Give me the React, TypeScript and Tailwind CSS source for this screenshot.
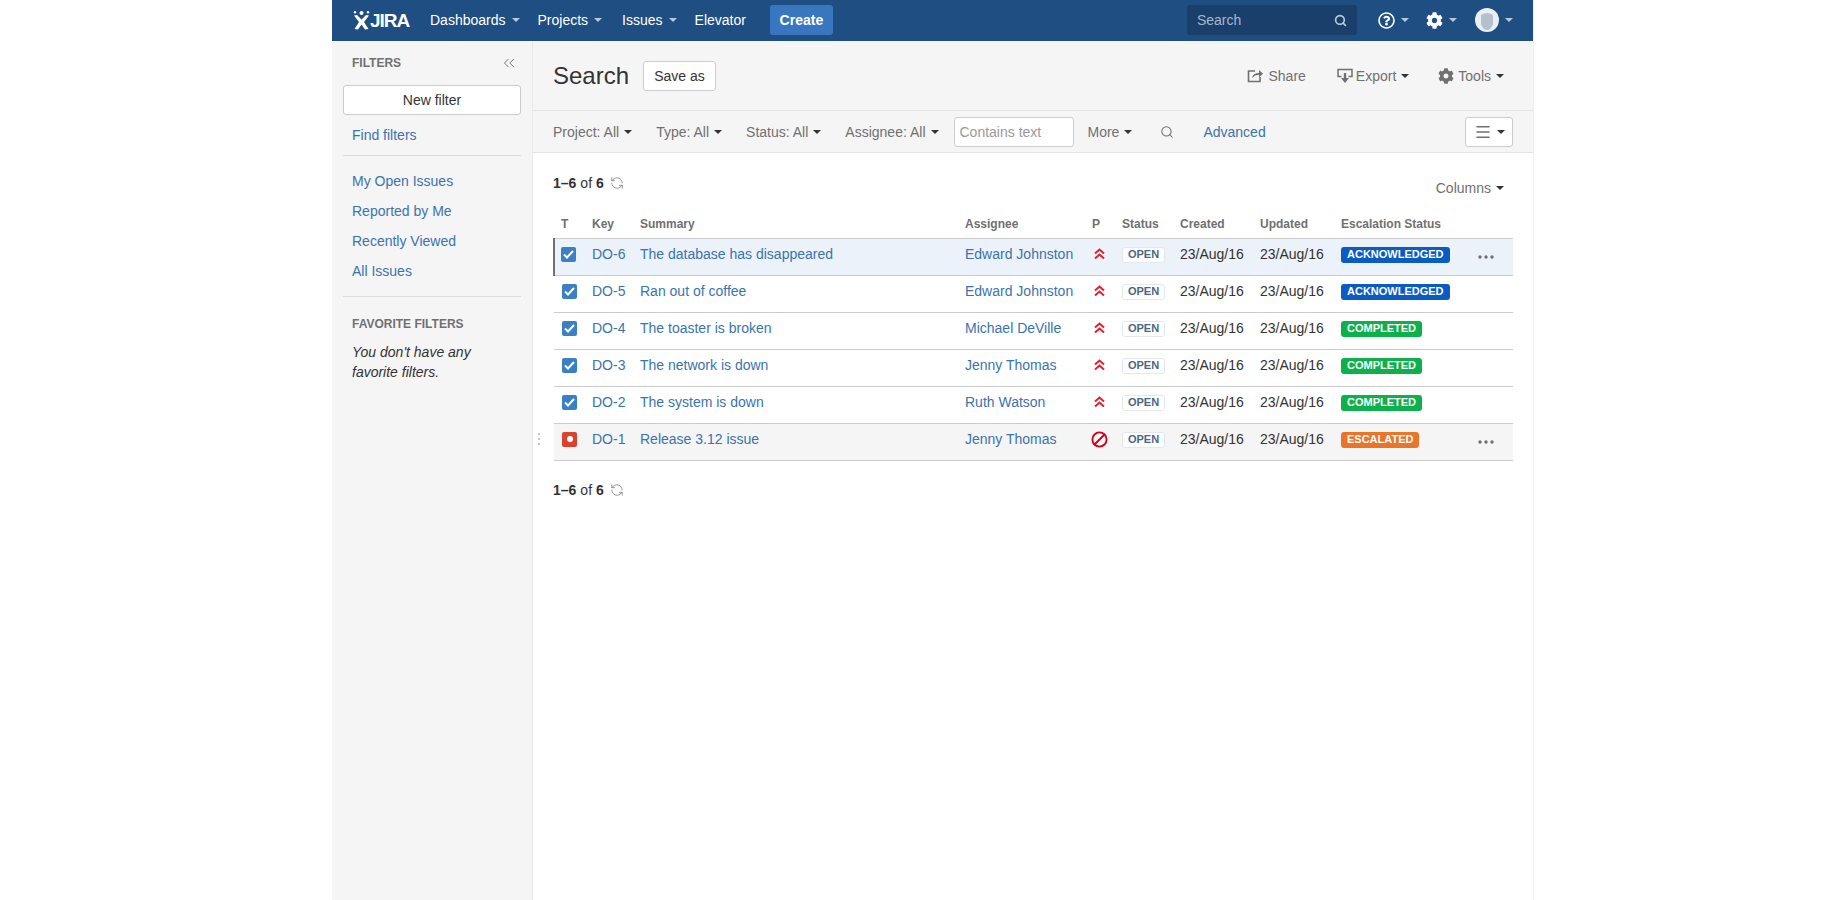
import React from "react";
import { Ban, ChevronsLeft, Menu, RefreshCcw, Search } from "lucide-react";
import { FaCog, FaRegQuestionCircle } from "react-icons/fa";

interface Issue {
  key: string;
  summary: string;
  assignee: string;
  escalation: string;
  badge: string;
}

const issues: Issue[] = [
  { key: "DO-6", summary: "The database has disappeared", assignee: "Edward Johnston", escalation: "ACKNOWLEDGED", badge: "bg-[#0b5cc2]" },
  { key: "DO-5", summary: "Ran out of coffee", assignee: "Edward Johnston", escalation: "ACKNOWLEDGED", badge: "bg-[#0b5cc2]" },
  { key: "DO-4", summary: "The toaster is broken", assignee: "Michael DeVille", escalation: "COMPLETED", badge: "bg-[#0cb14b]" },
  { key: "DO-3", summary: "The network is down", assignee: "Jenny Thomas", escalation: "COMPLETED", badge: "bg-[#0cb14b]" },
  { key: "DO-2", summary: "The system is down", assignee: "Ruth Watson", escalation: "COMPLETED", badge: "bg-[#0cb14b]" },
  { key: "DO-1", summary: "Release 3.12 issue", assignee: "Jenny Thomas", escalation: "ESCALATED", badge: "bg-[#ea7428]" },
];

function Caret({ light }: { light?: boolean }) {
  return (
    <span
      className={
        light
          ? "inline-block ml-[6px] w-0 h-0 border-x-[4px] border-x-transparent border-t-[4px] border-t-[#b9c9da]"
          : "inline-block ml-[5px] w-0 h-0 border-x-[4px] border-x-transparent border-t-[4px] border-t-[#333333]"
      }
    />
  );
}

function JiraLogo() {
  return (
    <div className="flex items-center w-[55px]">
      <svg width="17" height="20" viewBox="0 0 17 20" fill="white" className="shrink-0">
        <circle cx="8.5" cy="3" r="2" />
        <circle cx="2" cy="2.2" r="1.2" />
        <circle cx="15" cy="2.2" r="1.2" />
        <path d="M1 5.5 L4 5 L8.5 9.5 L13 5 L16 5.5 L11 12 L15.5 19 L12 19.5 L8.5 14.5 L5 19.5 L1.5 19 L6 12 Z" />
      </svg>
      <span className="text-[19px] font-bold text-white tracking-[-1px] leading-none">JIRA</span>
    </div>
  );
}

function NavItem({ label, caret, className }: { label: string; caret?: boolean; className: string }) {
  return (
    <div className={"flex items-center text-white " + className}>
      {label}
      {caret && <Caret light />}
    </div>
  );
}

function Header() {
  return (
    <header className="h-[41px] bg-[#1f4e82] flex items-center pl-[21px] pb-[1px] text-sm">
      <JiraLogo />
      <NavItem label="Dashboards" caret className="ml-[22px]" />
      <NavItem label="Projects" caret className="ml-[18px]" />
      <NavItem label="Issues" caret className="ml-[20px]" />
      <NavItem label="Elevator" className="ml-[18px]" />
      <button className="ml-[24px] w-[63px] h-[30px] rounded-[3px] bg-[#3877c0] text-white font-bold">Create</button>
      <div className="ml-[354px] w-[170px] h-[30px] rounded-[3px] bg-[#1a3f6b] flex items-center justify-between px-[10px] text-[#a6b7cb]">
        <span>Search</span>
        <Search size={13} strokeWidth={3} className="text-[#c0ccd9]" />
      </div>
      <FaRegQuestionCircle size={17} className="ml-[21px] text-white" />
      <Caret light />
      <FaCog size={17} className="ml-[17px] text-white" />
      <Caret light />
      <div className="ml-[18px] w-[24px] h-[24px] rounded-full bg-[#e9eff5] flex items-end justify-center overflow-hidden">
        <svg width="16" height="20" viewBox="0 0 16 20" fill="#b4c1cd">
          <path d="M2 3 Q8 -1 14 3 L14 12 Q12 18 8 18 Q4 18 2 12 Z" />
        </svg>
      </div>
      <Caret light />
    </header>
  );
}

function Sidebar() {
  const links = ["My Open Issues", "Reported by Me", "Recently Viewed", "All Issues"];
  return (
    <aside className="w-[201px] shrink-0 bg-[#f5f5f5] border-r border-r-[#e9e9e9] px-[11px] pt-[13px] text-sm">
      <div className="h-[18px] flex items-center justify-between pl-[9px] pr-[3px]">
        <span className="text-xs font-bold text-[#707070]">FILTERS</span>
        <ChevronsLeft size={18} strokeWidth={1.3} className="text-[#707070]" />
      </div>
      <button className="mt-[13px] w-full h-[30px] bg-white border border-[#cccccc] rounded-[3px] text-[#333333]">New filter</button>
      <div className="mt-[10px] px-[9px] h-[20px] leading-[20px] text-[#3b73af]">Find filters</div>
      <div className="mt-[10px] h-px bg-[#dddddd]" />
      <div className="mt-[10px] px-[9px]">
        {links.map((link) => (
          <div key={link} className="h-[30px] leading-[30px] text-[#3b73af]">
            {link}
          </div>
        ))}
      </div>
      <div className="mt-[10px] h-px bg-[#dddddd]" />
      <div className="mt-[18px] px-[9px] h-[18px] leading-[18px] text-xs font-bold text-[#707070]">FAVORITE FILTERS</div>
      <p className="mt-[9px] px-[9px] leading-[20px] italic text-[#333333]">
        You don't have any
        <br />
        favorite filters.
      </p>
    </aside>
  );
}

function TitleBar() {
  return (
    <div className="h-[70px] bg-[#f5f5f5] border-b border-b-[#e3e3e3] flex items-center px-[20px] text-sm">
      <h1 className="text-2xl text-[#333333]">Search</h1>
      <button className="ml-[14px] w-[73px] h-[30px] bg-white border border-[#cccccc] rounded-[3px] text-[#333333]">Save as</button>
      <div className="ml-auto flex items-center text-[#707070] pr-[9px]">
        <svg width="17" height="15" viewBox="0 0 17 15" fill="none" stroke="#707070" strokeWidth="1.6">
          <path d="M8 3 H1.5 V13.5 H13 V9" />
          <path d="M5 10 Q6 5 12 5 V2 L16 5.7 L12 9.2 V6.8 Q8 6.8 5 10 Z" fill="#707070" stroke="none" />
        </svg>
        <span className="ml-[4px]">Share</span>
        <svg width="16" height="16" viewBox="0 0 16 16" fill="none" stroke="#707070" strokeWidth="1.5" className="ml-[31px]">
          <path d="M4.5 8.5 H1 V1.5 H15 V8.5 H11.5" />
          <path d="M6.8 5 H9.2 V10 H12 L8 15 L4 10 H6.8 Z" fill="#707070" stroke="none" />
        </svg>
        <span className="ml-[3px]">Export</span>
        <Caret />
        <FaCog size={16} className="ml-[29px]" />
        <span className="ml-[4px]">Tools</span>
        <Caret />
      </div>
    </div>
  );
}

function FilterBar() {
  return (
    <div className="h-[42px] bg-[#f5f5f5] border-b border-b-[#e3e3e3] flex items-center px-[20px] text-sm text-[#707070]">
      <span>Project: All</span>
      <Caret />
      <span className="ml-[24px]">Type: All</span>
      <Caret />
      <span className="ml-[24px]">Status: All</span>
      <Caret />
      <span className="ml-[24px]">Assignee: All</span>
      <Caret />
      <div className="ml-[15px] w-[120px] h-[30px] bg-white border border-[#cccccc] rounded-[3px] flex items-center px-[5px] text-[#999999]">
        Contains text
      </div>
      <span className="ml-[14px]">More</span>
      <Caret />
      <Search size={14} strokeWidth={1.8} className="ml-[28px] text-[#707070]" />
      <span className="ml-[29px] text-[#3b73af]">Advanced</span>
      <button className="ml-auto w-[48px] h-[30px] bg-white border border-[#cccccc] rounded-[3px] flex items-center justify-center text-[#707070]">
        <Menu size={18} strokeWidth={2.2} />
        <Caret />
      </button>
    </div>
  );
}

function Pagination() {
  return (
    <div className="flex items-center text-sm text-[#333333]">
      <b>1–6</b>
      <span className="mx-[4px]">of</span>
      <b>6</b>
      <RefreshCcw size={14} strokeWidth={1.2} className="ml-[6px] text-[#707070]" />
    </div>
  );
}

function TypeIcon({ bug }: { bug: boolean }) {
  if (bug) {
    return (
      <div className="w-[15px] h-[15px] mt-[3px] rounded-[2px] bg-[#d9432f] flex items-center justify-center">
        <div className="w-[6px] h-[6px] rounded-full bg-white" />
      </div>
    );
  }
  return (
    <div className="w-[15px] h-[15px] mt-[3px] rounded-[2px] bg-[#3b7fc4] flex items-center justify-center">
      <svg width="11" height="9" viewBox="0 0 11 9" fill="none" stroke="white" strokeWidth="2">
        <path d="M1 4.5 L4 7.5 L10 1" />
      </svg>
    </div>
  );
}

function PriorityIcon() {
  return (
    <svg width="11" height="12" viewBox="0 0 11 12" fill="none" stroke="#e3212d" strokeWidth="2" className="mt-[4px] ml-[2px]">
      <path d="M1 5.5 L5.5 1.5 L10 5.5" />
      <path d="M1 10.5 L5.5 6.5 L10 10.5" />
    </svg>
  );
}

function Dots() {
  return (
    <svg width="16" height="4" viewBox="0 0 16 4" fill="#707070" className="mt-[11px]">
      <circle cx="2" cy="2" r="1.7" />
      <circle cx="8" cy="2" r="1.7" />
      <circle cx="14" cy="2" r="1.7" />
    </svg>
  );
}

function IssuesTable() {
  const heads = ["Key", "Summary", "Assignee", "P", "Status", "Created", "Updated", "Escalation Status"];
  return (
    <table className="w-[960px] table-fixed border-collapse text-sm mt-[12px]">
      <colgroup>
        <col className="w-[38px]" />
        <col className="w-[48px]" />
        <col className="w-[325px]" />
        <col className="w-[127px]" />
        <col className="w-[30px]" />
        <col className="w-[58px]" />
        <col className="w-[80px]" />
        <col className="w-[81px]" />
        <col className="w-[137px]" />
        <col />
      </colgroup>
      <thead>
        <tr className="h-[28px] text-xs text-[#707070] text-left border-b border-b-[#cccccc]">
          <th className="pl-[7px] font-bold">T</th>
          {heads.map((h) => (
            <th key={h} className="font-bold">
              {h}
            </th>
          ))}
          <th />
        </tr>
      </thead>
      <tbody>
        {issues.map((issue, index) => {
          const isFirst = index === 0;
          const isLast = index === issues.length - 1;
          return (
            <tr
              key={issue.key}
              className={
                "h-[37px] border-b border-b-[#cccccc] *:align-top *:pt-[5px] " +
                (isFirst ? "bg-[#ebf2f9]" : isLast ? "bg-[#f5f5f5]" : "bg-white")
              }
            >
              <td className={isFirst ? "pl-[6px] border-l-2 border-l-[#707070]" : "pl-[8px]"}>
                <TypeIcon bug={isLast} />
              </td>
              <td className="text-[#3b73af]">{issue.key}</td>
              <td className="text-[#3b73af]">{issue.summary}</td>
              <td className="text-[#3b73af]">{issue.assignee}</td>
              <td>
                {isLast ? (
                  <Ban size={17} strokeWidth={2.6} className="text-[#d0021b] -ml-[1px] mt-[2px] -scale-x-100" />
                ) : (
                  <PriorityIcon />
                )}
              </td>
              <td>
                <span className="inline-flex align-top mt-[3px] items-center justify-center w-[43px] h-[16px] bg-white border border-[#e4e8ed] rounded-[3px] text-[11px] font-bold text-[#4a6785]">
                  OPEN
                </span>
              </td>
              <td className="text-[#333333]">23/Aug/16</td>
              <td className="text-[#333333]">23/Aug/16</td>
              <td>
                <span className={"inline-flex align-top mt-[3px] items-center h-[16px] px-[6px] rounded-[3px] text-[11px] font-bold text-white " + issue.badge}>
                  {issue.escalation}
                </span>
              </td>
              <td>{(isFirst || isLast) && <Dots />}</td>
            </tr>
          );
        })}
      </tbody>
    </table>
  );
}

function App() {
  return (
    <div className="min-h-[900px] bg-white font-['Liberation_Sans','Arial',sans-serif]">
      <div className="ml-[332px] w-[1202px] min-h-[900px] border-r border-r-[#f0f0f0] flex flex-col">
        <Header />
        <div className="flex flex-1">
          <Sidebar />
          <main className="flex-1">
            <TitleBar />
            <FilterBar />
            <div className="px-[20px] pt-[20px] relative">
              <div className="flex items-start justify-between">
                <Pagination />
                <div className="flex items-center text-sm text-[#707070] mt-[5px] pr-[9px]">
                  Columns
                  <Caret />
                </div>
              </div>
              <IssuesTable />
              <div className="absolute left-[5px] top-[280px] flex flex-col gap-[3px]">
                <i className="block w-[2px] h-[2px] bg-[#c4c4c4]" />
                <i className="block w-[2px] h-[2px] bg-[#c4c4c4]" />
                <i className="block w-[2px] h-[2px] bg-[#c4c4c4]" />
              </div>
              <div className="mt-[19px]">
                <Pagination />
              </div>
            </div>
          </main>
        </div>
      </div>
    </div>
  );
}

export default App;
